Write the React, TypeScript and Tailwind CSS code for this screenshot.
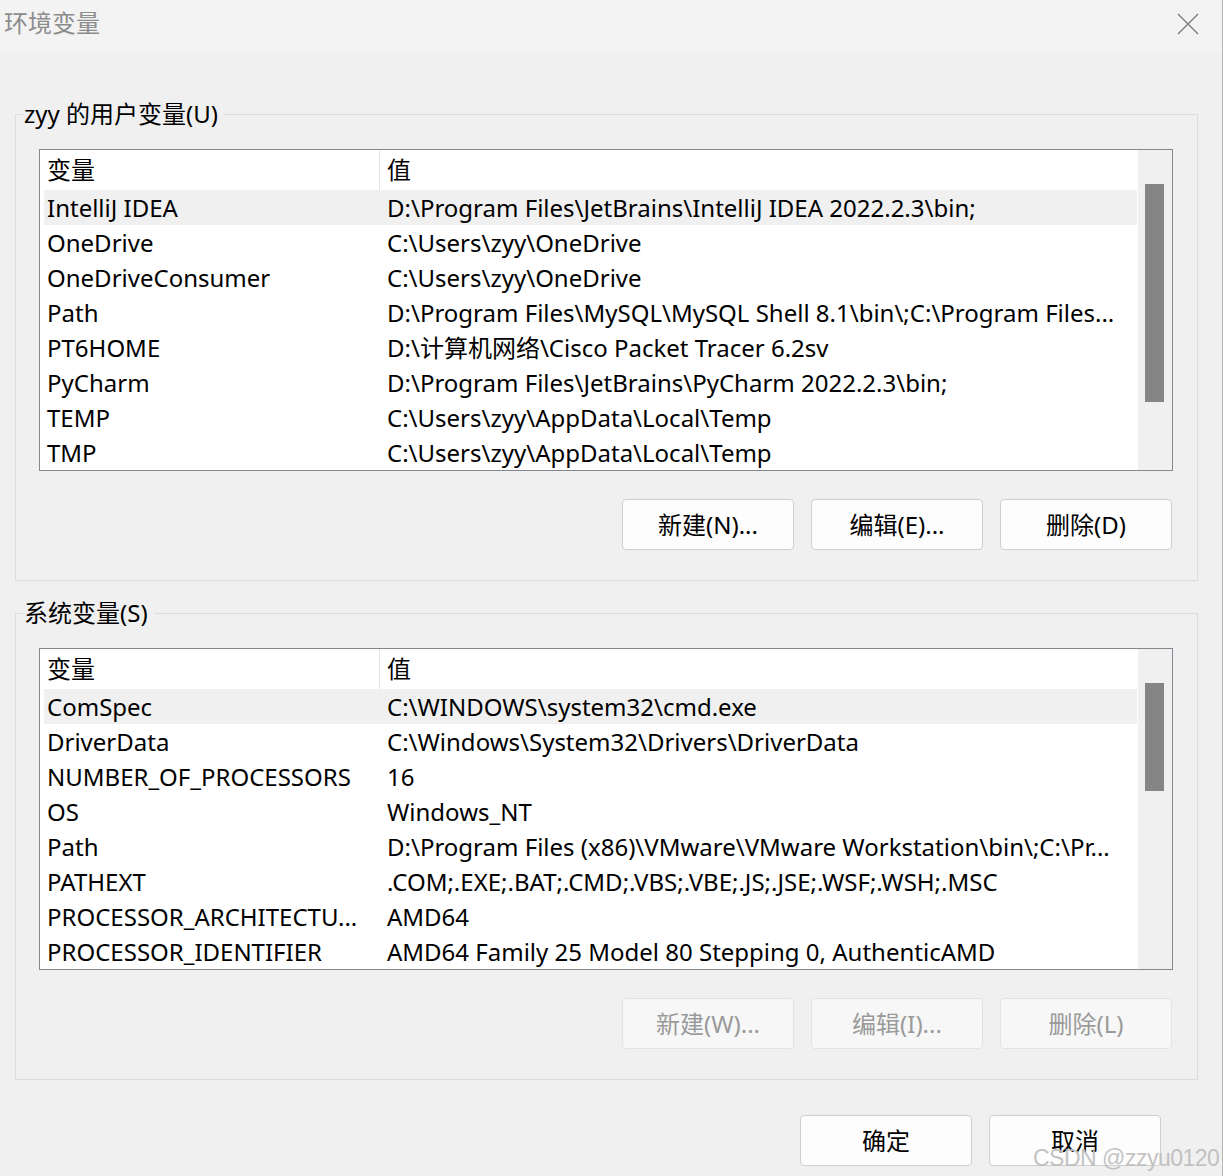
import React from "react";

const userVars: [string, string][] = [
  ["IntelliJ IDEA", "D:\\Program Files\\JetBrains\\IntelliJ IDEA 2022.2.3\\bin;"],
  ["OneDrive", "C:\\Users\\zyy\\OneDrive"],
  ["OneDriveConsumer", "C:\\Users\\zyy\\OneDrive"],
  ["Path", "D:\\Program Files\\MySQL\\MySQL Shell 8.1\\bin\\;C:\\Program Files..."],
  ["PT6HOME", "D:\\计算机网络\\Cisco Packet Tracer 6.2sv"],
  ["PyCharm", "D:\\Program Files\\JetBrains\\PyCharm 2022.2.3\\bin;"],
  ["TEMP", "C:\\Users\\zyy\\AppData\\Local\\Temp"],
  ["TMP", "C:\\Users\\zyy\\AppData\\Local\\Temp"],
];

const sysVars: [string, string][] = [
  ["ComSpec", "C:\\WINDOWS\\system32\\cmd.exe"],
  ["DriverData", "C:\\Windows\\System32\\Drivers\\DriverData"],
  ["NUMBER_OF_PROCESSORS", "16"],
  ["OS", "Windows_NT"],
  ["Path", "D:\\Program Files (x86)\\VMware\\VMware Workstation\\bin\\;C:\\Pr..."],
  ["PATHEXT", ".COM;.EXE;.BAT;.CMD;.VBS;.VBE;.JS;.JSE;.WSF;.WSH;.MSC"],
  ["PROCESSOR_ARCHITECTU...", "AMD64"],
  ["PROCESSOR_IDENTIFIER", "AMD64 Family 25 Model 80 Stepping 0, AuthenticAMD"],
];

function VarList({ rows, thumbHeight }: { rows: [string, string][]; thumbHeight: string }) {
  return (
    <div className="flex h-[322px] w-[1134px] border border-[#828790] bg-white">
      <div className="flex min-w-0 flex-1 flex-col overflow-hidden">
        <div className="flex h-[40px] shrink-0 items-center pl-[4px]">
          <div className="flex h-full w-[336px] items-center border-r border-[#e5e5e5] pl-[3px]">变量</div>
          <div className="pl-[7px]">值</div>
        </div>
        {rows.map(([name, value], i) => (
          <div
            key={name + i}
            className={`ml-[4px] flex h-[35px] shrink-0 items-center ${i === 0 ? "bg-[#f0f0f0]" : ""}`}
          >
            <div className="w-[336px] shrink-0 overflow-hidden whitespace-nowrap pl-[3px]">{name}</div>
            <div className="min-w-0 flex-1 overflow-hidden text-ellipsis whitespace-nowrap pl-[7px] pr-[4px]">
              {value}
            </div>
          </div>
        ))}
      </div>
      <div className="w-[35px] shrink-0 border-l border-white bg-[#f0f0f0] pl-[7px] pt-[34px]">
        <div className={`w-[19px] bg-[#858585] ${thumbHeight}`} />
      </div>
    </div>
  );
}

function Btn({ label, disabled }: { label: string; disabled?: boolean }) {
  return (
    <button
      className={`flex h-[51px] w-[172px] items-center justify-center rounded-[4px] border ${
        disabled ? "border-[#e3e3e3] bg-[#f7f7f7] text-[#9a9a9a]" : "border-[#cfcfcf] bg-[#fdfdfd] text-black"
      }`}
    >
      {label}
    </button>
  );
}

function Group({
  title,
  rows,
  thumbHeight,
  buttons,
  disabled,
}: {
  title: string;
  rows: [string, string][];
  thumbHeight: string;
  buttons: string[];
  disabled?: boolean;
}) {
  return (
    <fieldset className="w-[1183px] border border-[#dcdcdc] pb-[30px] pl-[23px] pt-[19px]">
      <legend className="-ml-[16px] pl-[1px] pr-[6px] leading-[32px] text-black">{title}</legend>
      <VarList rows={rows} thumbHeight={thumbHeight} />
      <div className="mt-[28px] flex w-[1133px] justify-end gap-[17px]">
        {buttons.map(b => (
          <Btn key={b} label={b} disabled={disabled} />
        ))}
      </div>
    </fieldset>
  );
}

export default function App() {
  return (
    <div className="relative h-[1176px] w-[1223px] overflow-hidden border-r border-[#b5b5b5] bg-[#f0f0f0] font-['Noto_Sans','Noto_Sans_CJK_SC',sans-serif] text-[24px] leading-normal text-black">
      <div className="flex h-[52px] items-center justify-between bg-[#f3f3f3] pb-[7px] pl-[4px] pr-[23px]">
        <span className="text-[24px] text-[#8c8c8c]">环境变量</span>
        <svg width="22" height="22" viewBox="0 0 22 22" className="mt-[2px] text-[#7a7a7a]">
          <path d="M1 1 L21 21 M21 1 L1 21" stroke="currentColor" strokeWidth="1.3" />
        </svg>
      </div>
      <div className="flex flex-col gap-[16px] pl-[15px] pt-[46px]">
        <Group
          title="zyy 的用户变量(U)"
          rows={userVars}
          thumbHeight="h-[218px]"
          buttons={["新建(N)...", "编辑(E)...", "删除(D)"]}
        />
        <Group
          title="系统变量(S)"
          rows={sysVars}
          thumbHeight="h-[108px]"
          buttons={["新建(W)...", "编辑(I)...", "删除(L)"]}
          disabled
        />
      </div>
      <div className="mt-[35px] flex gap-[17px] pl-[800px]">
        <Btn label="确定" />
        <Btn label="取消" />
      </div>
      <div className="absolute left-[1033px] top-[1141px] whitespace-nowrap font-['Liberation_Sans',sans-serif] text-[23px] tracking-[-0.5px] text-[#bdbdbd] opacity-90">
        CSDN @zzyu0120
      </div>
    </div>
  );
}
